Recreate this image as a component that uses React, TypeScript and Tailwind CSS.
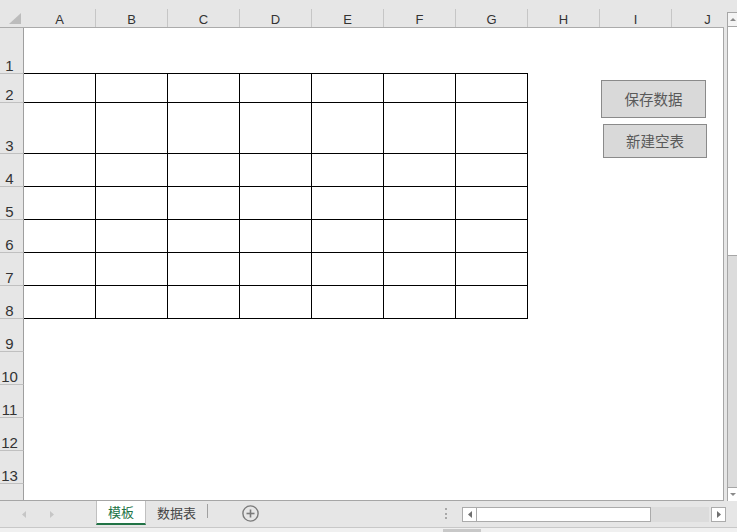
import React from "react";

const cols = ["A", "B", "C", "D", "E", "F", "G", "H", "I", "J"];
const rowHeights = [46, 29, 51, 33, 33, 33, 33, 33, 33, 33, 33, 33, 33];

function Tri({ dir, color, w = 5, h = 7 }: { dir: "l" | "r" | "u" | "d"; color: string; w?: number; h?: number }) {
  let pts = "";
  if (dir === "l") pts = `${w},0 0,${h / 2} ${w},${h}`;
  if (dir === "r") pts = `0,0 ${w},${h / 2} 0,${h}`;
  if (dir === "u") pts = `0,${h} ${w / 2},0 ${w},${h}`;
  if (dir === "d") pts = `0,0 ${w},0 ${w / 2},${h}`;
  return (
    <svg width={w} height={h} viewBox={`0 0 ${w} ${h}`} className="block">
      <polygon points={pts} fill={color} />
    </svg>
  );
}

export default function App() {
  const font = { fontFamily: '"Liberation Sans", Arial, sans-serif' };
  return (
    <div
      className="w-[737px] h-[532px] overflow-hidden bg-[#e6e6e6] flex flex-col select-none"
      style={font}
    >
      {/* main area */}
      <div className="flex h-[501px]">
        <div className="relative w-[724px] flex flex-col">
          {/* column header */}
          <div className="h-[28px] flex border-b border-[#ababab] bg-[#e6e6e6] overflow-hidden shrink-0">
            <div className="w-[24px] shrink-0 flex items-end justify-end pr-[3px] pb-[3px]">
              <Tri dir="u" color="#c4c4c4" w={0} h={0} />
              <svg width="12" height="11" viewBox="0 0 12 11" className="block">
                <polygon points="12,0 12,11 0,11" fill="#bcbcbc" />
              </svg>
            </div>
            {cols.map((c) => (
              <div key={c} className="w-[72px] shrink-0 flex flex-col">
                <div className="h-[9px]" />
                <div className="flex-1 border-r border-[#c6c6c6] flex items-end justify-center pb-[1px] text-[13px] leading-none text-[#333]">
                  {c}
                </div>
              </div>
            ))}
          </div>
          {/* body */}
          <div className="flex-1 flex flex-col border-r border-b border-[#a6a6a6] bg-white overflow-hidden">
            {rowHeights.map((h, ri) => (
              <div key={ri} className="flex shrink-0" style={{ height: h }}>
                <div className="w-[24px] shrink-0 bg-[#e6e6e6] border-r border-b border-r-[#9f9f9f] border-b-[#c0c0c0] flex items-end justify-center pr-[4px] text-[15px] leading-none text-[#333]">
                  {ri + 1}
                </div>
                {cols.map((c, ci) => {
                  let cls = "w-[72px] shrink-0";
                  if (ci < 7 && ri >= 1 && ri <= 7) cls += " border-r border-b border-black";
                  else if (ci < 7 && ri === 0) cls += " border-b border-black";
                  return <div key={c} className={cls} />;
                })}
              </div>
            ))}
            <div className="flex flex-1">
              <div className="w-[24px] shrink-0 bg-[#e6e6e6] border-r border-[#9f9f9f]" />
            </div>
          </div>

          {/* buttons */}
          <div
            className="absolute left-[601px] top-[80px] w-[105px] h-[38px] bg-[#d9d9d9] border border-[#8a8a8a] flex items-center justify-center text-[14.5px] text-[#595959]"
            style={{ fontFamily: '"Noto Sans CJK SC", sans-serif' }}
          >
            保存数据
          </div>
          <div
            className="absolute left-[603px] top-[124px] w-[104px] h-[34px] bg-[#d9d9d9] border border-[#8a8a8a] flex items-center justify-center text-[14.5px] text-[#595959]"
            style={{ fontFamily: '"Noto Sans CJK SC", sans-serif' }}
          >
            新建空表
          </div>
        </div>

        {/* vertical scrollbar */}
        <div className="w-[13px] pt-[12px] pl-[3px] flex flex-col">
          <div className="flex-1 flex flex-col border-l border-t border-[#a6a6a6]">
            <div className="h-[14px] bg-[#f4f4f4] border-b border-[#a6a6a6] flex items-center justify-center">
              <Tri dir="u" color="#8a8a8a" w={6} h={3} />
            </div>
            <div className="h-[229px] bg-white border-b border-[#a6a6a6]" />
            <div className="flex-1 bg-[#dcdcdc]" />
            <div className="h-[14px] bg-white border-t border-[#a6a6a6] flex items-center justify-center">
              <Tri dir="d" color="#8a8a8a" w={6} h={3} />
            </div>
          </div>
        </div>
      </div>

      {/* bottom bar */}
      <div className="flex-1 flex flex-col">
        <div className="h-[27px] flex border-b border-[#c8c8c8] shrink-0">
          <div className="w-[96px] shrink-0 flex items-center pl-[22px] gap-[24px] pt-[1px]">
            <Tri dir="l" color="#c6c6c6" w={4} h={7} />
            <Tri dir="r" color="#c6c6c6" w={4} h={7} />
          </div>
          <div
            className="w-[50px] h-[24px] shrink-0 bg-white border-l border-r border-[#c0c0c0] border-b-2 border-b-[#217346] flex items-center justify-center text-[13px] text-[#217346]"
            style={{ fontFamily: '"Noto Sans CJK SC", sans-serif' }}
          >
            模板
          </div>
          <div
            className="w-[61px] h-[24px] shrink-0 flex items-center justify-center text-[13px] text-[#444]"
            style={{ fontFamily: '"Noto Sans CJK SC", sans-serif' }}
          >
            数据表
          </div>
          <div className="w-[1px] h-[14px] mt-[3px] bg-[#a0a0a0] shrink-0" />
          <div className="ml-[34px] mt-[4px] shrink-0">
            <svg width="17" height="17" viewBox="0 0 17 17" className="block">
              <circle cx="8.5" cy="8.5" r="7.6" fill="none" stroke="#7a7a7a" strokeWidth="1.4" />
              <line x1="8.5" y1="4.5" x2="8.5" y2="12.5" stroke="#7a7a7a" strokeWidth="1.6" />
              <line x1="4.5" y1="8.5" x2="12.5" y2="8.5" stroke="#7a7a7a" strokeWidth="1.6" />
            </svg>
          </div>
          <div className="ml-[186px] mt-[7px] flex flex-col gap-[2.5px] shrink-0">
            <div className="w-[2px] h-[2px] bg-[#a8a8a8]" />
            <div className="w-[2px] h-[2px] bg-[#a8a8a8]" />
            <div className="w-[2px] h-[2px] bg-[#a8a8a8]" />
          </div>
          <div className="ml-[15px] mt-[6px] h-[15px] flex shrink-0">
            <div className="w-[15px] h-full bg-white border border-[#ababab] flex items-center justify-center">
              <Tri dir="l" color="#6f6f6f" w={4} h={7} />
            </div>
            <div className="w-[174px] h-full bg-white border-t border-b border-r border-[#ababab]" />
            <div className="w-[58px] h-full bg-[#dcdcdc]" />
            <div className="w-[2px]" />
            <div className="w-[15px] h-full bg-white border border-[#ababab] flex items-center justify-center">
              <Tri dir="r" color="#6f6f6f" w={4} h={7} />
            </div>
          </div>
        </div>
        <div className="flex-1 bg-[#f0f0f0] flex">
          <div className="ml-[443px] mt-[1px] w-[38px] bg-[#c8c8c8]" />
        </div>
      </div>
    </div>
  );
}
